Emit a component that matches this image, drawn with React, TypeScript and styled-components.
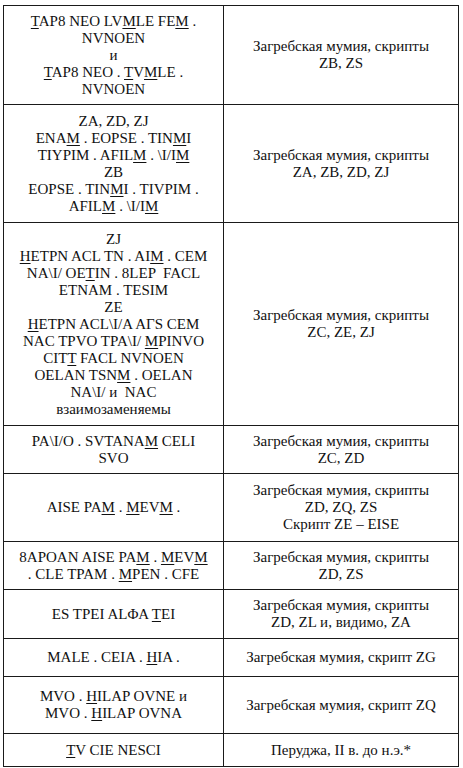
import React from "react";
import styled, { createGlobalStyle } from "styled-components";

const GlobalStyle = createGlobalStyle`
  html, body {
    margin: 0;
    padding: 0;
    background: #ffffff;
  }
`;

const Page = styled.div`
  padding: 5px 4px 0 3px;
  font-family: serif;
`;

const Table = styled.table`
  width: 456px;
  border-collapse: collapse;
  table-layout: fixed;
  font-family: serif;
`;

const Row = styled.tr<{ $h: number }>`
  height: ${(p) => p.$h}px;
`;

const Cell = styled.td<{ $w?: number }>`
  border: 1px solid #1a1a1a;
  padding: 0 4px;
  text-align: center;
  vertical-align: middle;
  font-family: serif;
  font-size: 15px;
  line-height: 17px;
  color: #111;
  width: ${(p) => (p.$w ? `${p.$w}px` : "auto")};
`;

const Line = styled.div`
  white-space: pre;
`;

const U = styled.span`
  text-decoration: underline;
  text-decoration-thickness: 1px;
  text-underline-offset: 2px;
`;

// "_X" underlines the next character
function marked(text: string) {
  const out: React.ReactNode[] = [];
  let buf = "";
  for (let i = 0; i < text.length; i++) {
    if (text[i] === "_" && i + 1 < text.length) {
      if (buf) out.push(buf);
      buf = "";
      out.push(<U key={i}>{text[i + 1]}</U>);
      i++;
    } else {
      buf += text[i];
    }
  }
  if (buf) out.push(buf);
  return out;
}

interface Entry {
  h: number;
  left: string[];
  right: string[];
}

const MUMMY = "Загребская мумия, скрипты";

const rows: Entry[] = [
  {
    h: 99,
    left: ["_TAP8 NEO LV_MLE FE_M .", "NVNOEN", "и", "_TAP8 NEO . _TV_MLE .", "NVNOEN"],
    right: [MUMMY, "ZB, ZS"],
  },
  {
    h: 118,
    left: [
      "ZA, ZD, ZJ",
      "ENA_M . EOPSE . TIN_MI",
      "TIYPIM . AFIL_M . \\I/I_M",
      "ZB",
      "EOPSE . TIN_MI . TIVPIM .",
      "AFIL_M . \\I/I_M",
    ],
    right: [MUMMY, "ZA, ZB, ZD, ZJ"],
  },
  {
    h: 203,
    left: [
      "ZJ",
      "_HETPN ACL TN . AI_M . CEM",
      "NA\\I/ OE_TIN . 8LEP  FACL",
      "ETNAM . TESIM",
      "ZE",
      "_HETPN ACL\\I/A AΓS CEM",
      "NAC TPVO TPA\\I/ _MPINVO",
      "CIT_T FACL NVNOEN",
      "OELAN TSN_M . OELAN",
      "NA\\I/ и  NAC",
      "взаимозаменяемы",
    ],
    right: [MUMMY, "ZC, ZE, ZJ"],
  },
  {
    h: 48,
    left: ["PA\\I/O . SVTANA_M CELI", "SVO"],
    right: [MUMMY, "ZC, ZD"],
  },
  {
    h: 68,
    left: ["AISE PA_M . _MEV_M ."],
    right: [MUMMY, "ZD, ZQ, ZS", "Скрипт ZE – EISE"],
  },
  {
    h: 48,
    left: ["8APOAN AISE PA_M . _MEV_M", ". CLE TPAM . _MPEN . CFE"],
    right: [MUMMY, "ZD, ZS"],
  },
  {
    h: 49,
    left: ["ES TPEI ALΦA _TEI"],
    right: [MUMMY, "ZD, ZL и, видимо, ZA"],
  },
  {
    h: 38,
    left: ["MALE . CEIA . _HIA ."],
    right: ["Загребская мумия, скрипт ZG"],
  },
  {
    h: 57,
    left: ["MVO . _HILAP OVNE и", "MVO . _HILAP OVNA"],
    right: ["Загребская мумия, скрипт ZQ"],
  },
  {
    h: 33,
    left: ["_TV CIE NESCI"],
    right: ["Перуджа, II в. до н.э.*"],
  },
];

function App() {
  return (
    <>
      <GlobalStyle />
      <Page>
        <Table>
          <tbody>
            {rows.map((r, i) => (
              <Row key={i} $h={r.h}>
                <Cell $w={211}>
                  {r.left.map((l, j) => (
                    <Line key={j}>{marked(l)}</Line>
                  ))}
                </Cell>
                <Cell>
                  {r.right.map((l, j) => (
                    <Line key={j}>{l}</Line>
                  ))}
                </Cell>
              </Row>
            ))}
          </tbody>
        </Table>
      </Page>
    </>
  );
}

export default App;
